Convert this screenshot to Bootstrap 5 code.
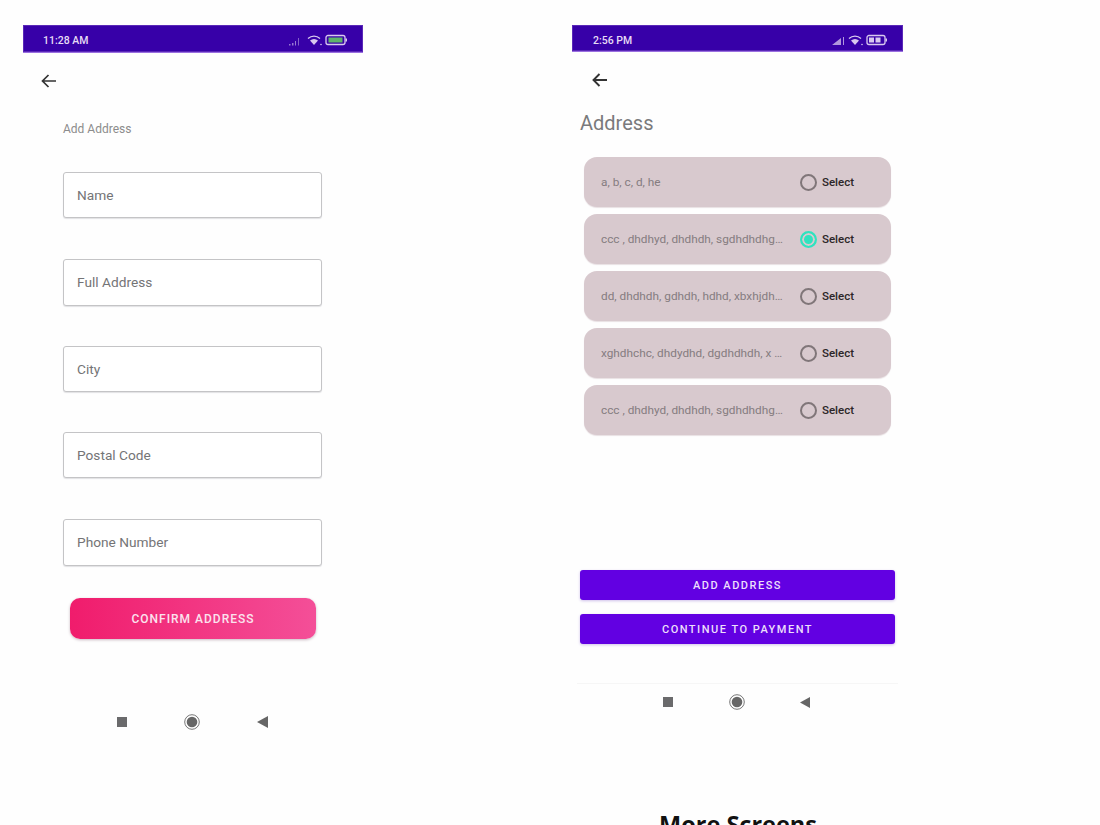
<!DOCTYPE html>
<html lang="en">
<head>
<meta charset="utf-8">
<title>Screens</title>
<link href="https://cdn.jsdelivr.net/npm/bootstrap@5.3.0/dist/css/bootstrap.min.css" rel="stylesheet">
<style>
html,body{height:825px;overflow:hidden;background:#fefefe}
body{font-family:Roboto,"Liberation Sans",sans-serif}
.stage{height:825px;overflow:hidden;padding-top:25px}
.phone-a{width:340px;margin-left:23px;flex:none}
.phone-b{width:331px;margin-left:209px;flex:none}
.statusbar{background:#3700a8;color:#e6dcf5;font-size:10.5px;font-weight:500;border-bottom:1px solid #9a6fe0;box-shadow:inset 0 0 0 1px #5a28b8}
.statusbar span{padding-top:2px}
.phone-a .statusbar{height:28px;padding:3px 15px 0 20px}
.phone-b .statusbar{height:27px;padding:4px 15px 0 21px}
.sb-icons{color:#d9c9ef}
.back{display:block}
.phone-a .back{margin:21px 0 0 18px}
.phone-b .back{margin:21px 0 0 20px}
.title-a{font-size:12px;color:#8c8c8c;margin:33px 0 0 40px;line-height:16px}
.form-a{margin:35px 0 0 40px;width:259px}
.field{height:46px;border:1px solid #c4c4c6;border-radius:3px;font-size:13.7px;color:#747476;padding:0 13px;margin-bottom:41px;box-shadow:0 1px 1px #e2e2e4;background:#fff}
.field.f2{height:47px}
.field.f3{margin-bottom:40px}
.confirm{display:block;width:246px;height:41px;margin:-9px 0 0 47px;border:0;border-radius:10px;background:linear-gradient(90deg,#f01c6c,#f44f98);color:#fbe3ee;font-size:12px;font-weight:500;letter-spacing:1px;box-shadow:0 1px 3px #c9b9c2}
.softnav{color:#6b6b6d}
.phone-a .softnav{margin-top:75px;padding-left:94px;width:245px}
.sq{width:10px;height:10px;background:#6a6a6c}
.title-b{font-size:20px;color:#7a7a7c;line-height:26px;margin:23px 0 0 8px}
.addr-list{margin:21px 0 0 12px;width:307px}
.addr{height:50px;margin-bottom:7px;background:#d8c9ce;border-radius:13px;padding:0 20px 0 17px;font-size:11.8px;color:#857c80;box-shadow:0 1px 1px #e8e0e3}
.addr-text{width:184px;margin-right:15px;padding-top:2px;white-space:nowrap;overflow:hidden;text-overflow:ellipsis}
.dot{width:17px;height:17px;border-radius:50%;border:2px solid #807679;margin-right:5px;flex:none}
.dot.on{border-color:#2fe3bf;background:#2fe3bf;box-shadow:inset 0 0 0 2px #d8c9ce}
.sel{color:#2c2628;font-size:11.5px;font-weight:500;padding-top:2px}
.actions{margin:135px 0 0 8px;width:315px}
.act{display:block;width:100%;height:30px;margin-bottom:14px;border:0;border-radius:3px;background:#6200e2;color:#ecdffb;font-size:11px;font-weight:500;letter-spacing:1.5px;box-shadow:0 1px 3px #cfc0ea;padding:2px 0 0}
.rule{border-top:1px solid #f6f6f6;margin:39px 5px 0 5px;height:0}
.phone-b .softnav{margin-top:10px;padding-left:91px;width:238px}
.more{font-family:"Open Sans","Liberation Sans",sans-serif;font-weight:700;font-size:23.5px;color:#111;text-align:center;margin:100px 0 0 1px;line-height:28px;white-space:nowrap}
</style>
</head>
<body class="m-0">
<div class="stage d-flex align-items-start">
  <div class="phone-a">
    <div class="statusbar d-flex align-items-center justify-content-between">
      <span>11:28 AM</span>
      <svg class="sb-icons" width="60" height="14" viewBox="0 0 60 14"><path d="M1 11h1.500v1.500H1zM4 10h1.500v2.500H4zM7 8h1v4.500H7zM10 5h.8v7.500H10z" fill="currentColor" opacity=".6"/><path d="M20 5.500c3.500-3.300 8.500-3.300 12 0" fill="none" stroke="currentColor" stroke-width="1.300"/><path d="M22 7.500c2.500-2 5.500-2 8 0l-4 4.500z" fill="currentColor"/><circle cx="33" cy="11.500" r=".8" fill="currentColor"/><rect x="38" y="2.500" width="19" height="9" rx="2" fill="none" stroke="currentColor" stroke-width="1.300"/><rect x="40.500" y="4.500" width="14" height="5" fill="#5fb46a"/><rect x="57.500" y="5.500" width="1.500" height="3" fill="currentColor"/></svg>
    </div>
    <svg class="back" width="16" height="14" viewBox="0 0 16 14"><path d="M15 7H2M7.500 1 1.500 7l6 6" fill="none" stroke="#333" stroke-width="1.700"/></svg>
    <div class="title-a">Add Address</div>
    <div class="form-a">
      <div class="field d-flex align-items-center">Name</div>
      <div class="field f2 f3 d-flex align-items-center">Full Address</div>
      <div class="field d-flex align-items-center f3">City</div>
      <div class="field d-flex align-items-center">Postal Code</div>
      <div class="field f2 d-flex align-items-center">Phone Number</div>
    </div>
    <button class="confirm" type="button">CONFIRM ADDRESS</button>
    <div class="softnav d-flex align-items-center justify-content-between">
      <div class="sq"></div>
      <svg width="16" height="16" viewBox="0 0 16 16"><circle cx="8" cy="8" r="7.300" fill="none" stroke="#777" stroke-width="1"/><circle cx="8" cy="8" r="5.300" fill="#666"/></svg>
      <svg width="11" height="12" viewBox="0 0 11 12"><path d="M11 0v12L0 6z" fill="#666"/></svg>
    </div>
  </div>
  <div class="phone-b">
    <div class="statusbar d-flex align-items-center justify-content-between">
      <span>2:56 PM</span>
      <svg class="sb-icons" width="56" height="14" viewBox="0 0 56 14"><path d="M0 12 9 5v7zM11 4h1v8h-1z" fill="currentColor" opacity=".75"/><path d="M17 5.500c3.500-3.300 8.500-3.300 12 0" fill="none" stroke="currentColor" stroke-width="1.300"/><path d="M19 7.500c2.500-2 5.500-2 8 0l-4 4.500z" fill="currentColor"/><circle cx="30" cy="11.500" r=".8" fill="currentColor"/><rect x="35" y="2.500" width="18" height="9" rx="2" fill="none" stroke="currentColor" stroke-width="1.300"/><rect x="37" y="4.500" width="5" height="5" fill="currentColor"/><rect x="43.500" y="4.500" width="5" height="5" fill="currentColor"/><rect x="53.500" y="5.500" width="1.500" height="3" fill="currentColor"/></svg>
    </div>
    <svg class="back" width="16" height="14" viewBox="0 0 16 14"><path d="M15 7H2M7.500 1 1.500 7l6 6" fill="none" stroke="#333" stroke-width="1.900"/></svg>
    <div class="title-b">Address</div>
    <div class="addr-list">
      <div class="addr d-flex align-items-center"><div class="addr-text">a, b, c, d, he</div><span class="dot"></span><span class="sel">Select</span></div>
      <div class="addr d-flex align-items-center"><div class="addr-text">ccc , dhdhyd, dhdhdh, sgdhdhdhgdhdhdhd</div><span class="dot on"></span><span class="sel">Select</span></div>
      <div class="addr d-flex align-items-center"><div class="addr-text">dd, dhdhdh, gdhdh, hdhd, xbxhjdhdhdhdh</div><span class="dot"></span><span class="sel">Select</span></div>
      <div class="addr d-flex align-items-center"><div class="addr-text">xghdhchc, dhdydhd, dgdhdhdh, x xhdhdh</div><span class="dot"></span><span class="sel">Select</span></div>
      <div class="addr d-flex align-items-center"><div class="addr-text">ccc , dhdhyd, dhdhdh, sgdhdhdhgdhdhdhd</div><span class="dot"></span><span class="sel">Select</span></div>
    </div>
    <div class="actions">
      <button class="act" type="button">ADD ADDRESS</button>
      <button class="act" type="button">CONTINUE TO PAYMENT</button>
    </div>
    <div class="rule"></div>
    <div class="softnav d-flex align-items-center justify-content-between">
      <div class="sq"></div>
      <svg width="16" height="16" viewBox="0 0 16 16"><circle cx="8" cy="8" r="7.300" fill="none" stroke="#777" stroke-width="1"/><circle cx="8" cy="8" r="5.300" fill="#666"/></svg>
      <svg width="10" height="11" viewBox="0 0 10 11"><path d="M10 0v11L0 5.500z" fill="#666"/></svg>
    </div>
    <div class="more">More Screens</div>
  </div>
</div>
<script src="https://cdn.jsdelivr.net/npm/bootstrap@5.3.0/dist/js/bootstrap.bundle.min.js"></script>
</body>
</html>
